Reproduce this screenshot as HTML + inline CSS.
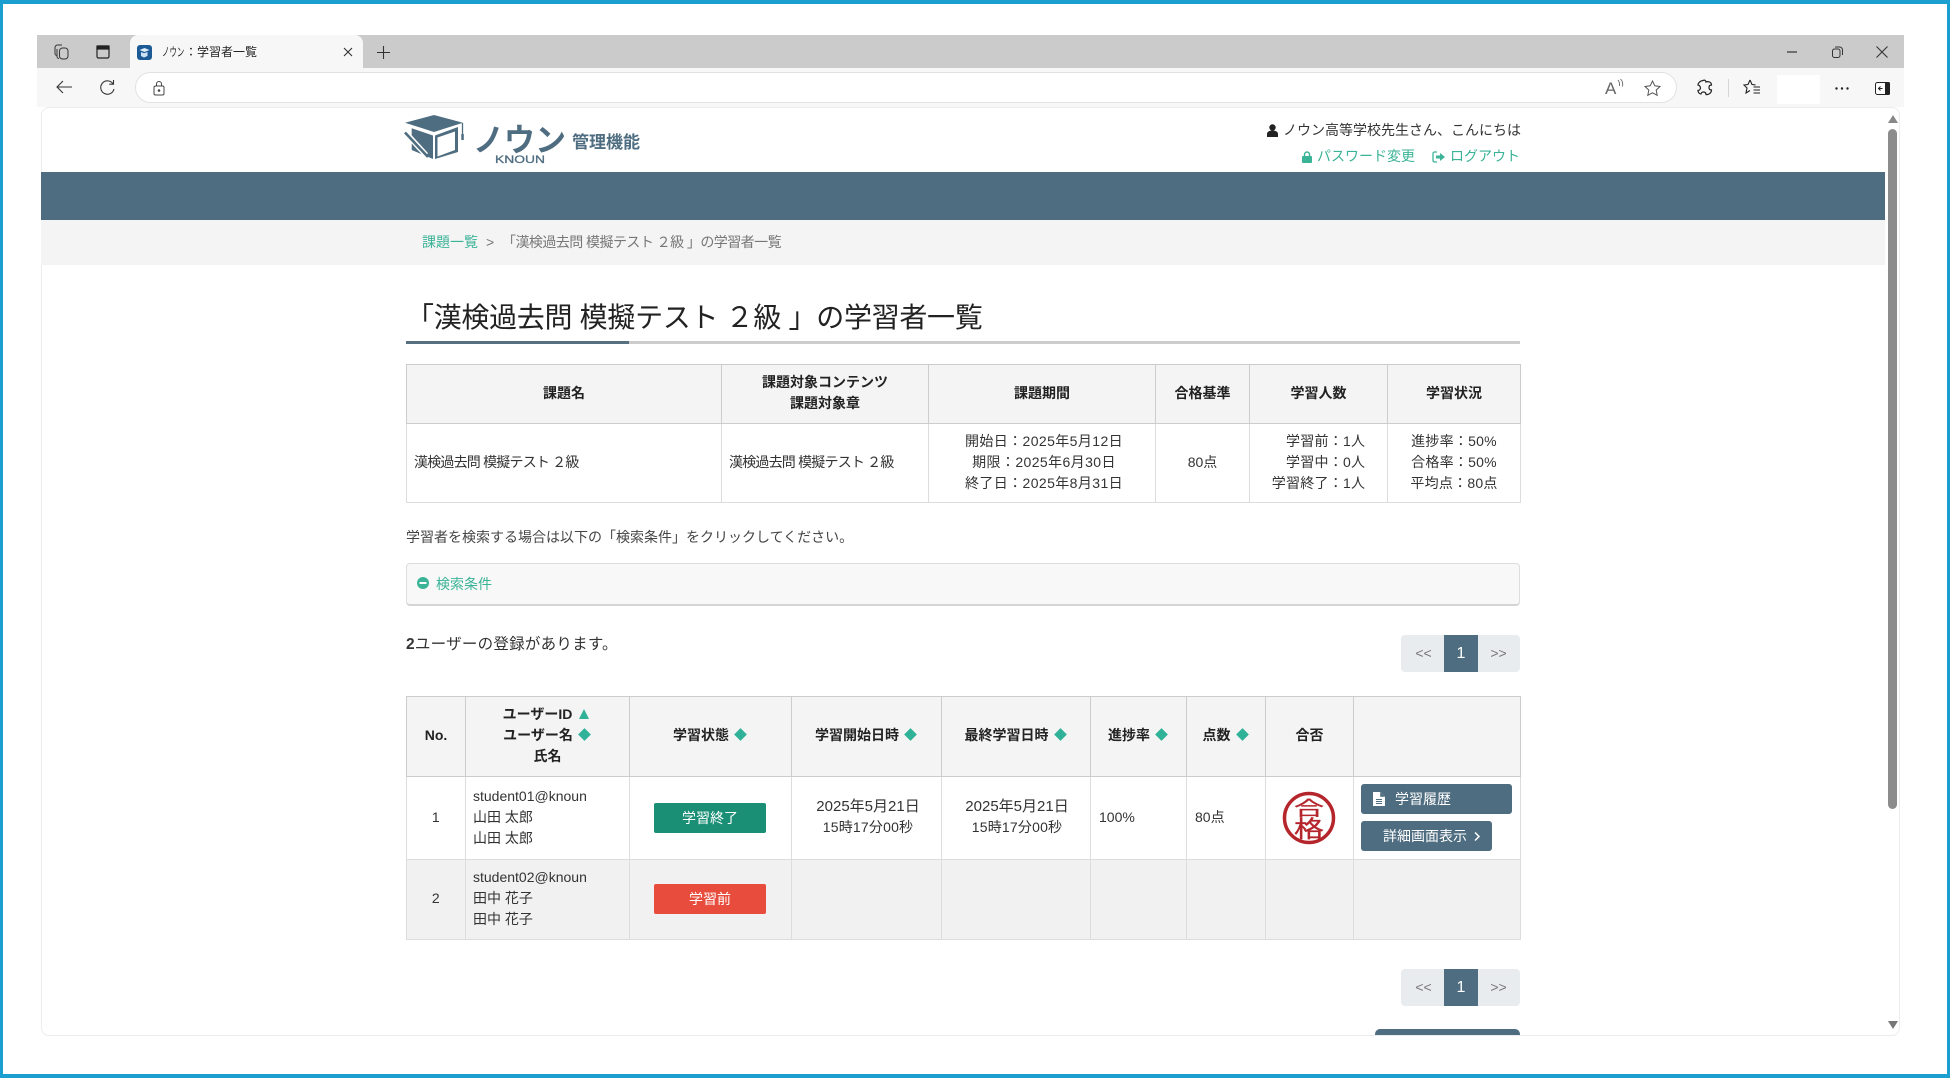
<!DOCTYPE html>
<html lang="ja"><head><meta charset="utf-8"><title>ノウン：学習者一覧</title>
<style>
*{box-sizing:border-box}
html,body{margin:0;padding:0;width:1950px;height:1078px;overflow:hidden;background:#fff}
body{position:relative;font-family:"Liberation Sans","Noto Sans CJK JP",sans-serif;font-size:14px;color:#333}
.a{position:absolute}
.t{position:absolute;white-space:nowrap;line-height:20px;height:20px}
.g{color:#3bb397}
table{position:absolute;border-collapse:collapse;table-layout:fixed;font-size:14px}
td,th{padding:0 0 2px;text-align:center;vertical-align:middle;line-height:21px;color:#333}
th{background:#f4f4f4;border:1px solid #ccc;font-weight:700;color:#222}
td{border:1px solid #ddd;letter-spacing:.4px}
.l{text-align:left;padding-left:7px}
.d{display:inline-block;width:9px;height:9px;background:#2fb298;transform:rotate(45deg);margin-left:7px;margin-right:3px;vertical-align:1px}
.up{display:inline-block;width:0;height:0;border-left:5px solid transparent;border-right:5px solid transparent;border-bottom:10px solid #2fb298;margin-left:7px;margin-right:3px}
.btn{position:absolute;background:#4f6d80;color:#fff;border-radius:3px;line-height:30px;height:30px}
.pg{position:absolute;left:1401px;width:119px;height:37px;background:#e9ecef;border-radius:4px;color:#777;font-size:14px;line-height:37px}
.pg b{position:absolute;left:43px;width:34px;height:37px;background:#4f6d80;color:#fff;text-align:center;font-weight:400;font-size:16px}
.pg span{position:absolute;width:43px;text-align:center}
svg{position:absolute;overflow:visible}
</style></head><body>
<!-- outer frame -->
<div class="a" style="left:0;top:0;width:1950px;height:1078px;border:solid #1b9fd1;border-width:4px 3px 4px 3px"></div>

<!-- browser chrome -->
<div class="a" style="left:37px;top:35px;width:1867px;height:33px;background:#cbcbcb"></div>
<div class="a" style="left:37px;top:68px;width:1867px;height:39px;background:#f7f7f7"></div>
<div class="a" style="left:130px;top:35px;width:233px;height:33px;background:#f7f7f7;border-radius:8px 8px 0 0"></div>
<!-- collections icon -->
<svg style="left:54px;top:44px" width="16" height="16" viewBox="0 0 16 16" fill="none" stroke="#333" stroke-width="1"><path d="M5 14.500a2 2 0 0 1-2-2V5"/><path d="M3 11.500A2 2 0 0 1 1 9.500V3.500"/><rect x="5.500" y="4" width="8.500" height="11" rx="3"/><path d="M1 5V3.500a2.500 2.500 0 0 1 2.500-2.500H8"/></svg>
<!-- tab icon -->
<svg style="left:96px;top:45px" width="14" height="14" viewBox="0 0 14 14" fill="none" stroke="#222" stroke-width="1.200"><rect x="1" y="1" width="12" height="12" rx="1.500"/><rect x="1" y="1" width="12" height="3" fill="#222"/></svg>
<!-- favicon -->
<div class="a" style="left:137px;top:45px;width:15px;height:15px;background:#1c5a96;border-radius:3px"></div>
<svg style="left:137px;top:45px" width="15" height="15" viewBox="0 0 15 15"><path d="M2.500 5L7.500 3l5 2-5 2z" fill="#dfeefa"/><path d="M4 7l3 1.300 3.500-1.300v4l-3.500 1.500L4 11z" fill="#cfe3f5"/></svg>
<div class="t" style="left:162px;top:42px;font-size:12px;color:#222"><span style="display:inline-block;width:23px;transform:scaleX(.62);transform-origin:left">ノウン</span><span>：学習者一覧</span></div>
<svg style="left:343px;top:47px" width="10" height="10" viewBox="0 0 10 10" stroke="#333" stroke-width="1.100" fill="none"><path d="M1 1l8 8M9 1L1 9"/></svg>
<svg style="left:377px;top:46px" width="13" height="13" viewBox="0 0 13 13" stroke="#333" stroke-width="1.100" fill="none"><path d="M6.500 0v13M0 6.500h13"/></svg>
<svg style="left:1787px;top:51px" width="10" height="2"><path d="M0 1h10" stroke="#333" stroke-width="1.200"/></svg>
<svg style="left:1832px;top:46px" width="11" height="12" viewBox="0 0 11 12" fill="none" stroke="#333" stroke-width="1"><rect x=".5" y="3" width="7.500" height="8.500" rx="2"/><path d="M3 1h4.500a3 3 0 0 1 3 3v5"/></svg>
<svg style="left:1876px;top:46px" width="12" height="12" viewBox="0 0 12 12" fill="none" stroke="#333" stroke-width="1.100"><path d="M.5.5l11 11M11.500.5l-11 11"/></svg>

<!-- toolbar -->
<svg style="left:56px;top:80px" width="16" height="14" viewBox="0 0 16 14" fill="none" stroke="#333" stroke-width="1.100"><path d="M16 7H1M7 1L1 7l6 6"/></svg>
<svg style="left:100px;top:80px" width="15" height="16" viewBox="0 0 15 16" fill="none" stroke="#333" stroke-width="1.100"><path d="M13 3.800A6.700 6.700 0 1 0 14 9"/><path d="M13.500 0v4.200H9.300"/></svg>
<div class="a" style="left:135px;top:72px;width:1542px;height:31px;background:#fff;border:1px solid #e2e2e2;border-radius:16px"></div>
<svg style="left:153px;top:80px" width="12" height="16" viewBox="0 0 12 16" fill="none" stroke="#444" stroke-width="1"><rect x="1" y="6" width="10" height="9" rx="1.500"/><path d="M3.500 6V4a2.500 2.500 0 0 1 5 0v2"/><circle cx="6" cy="10.500" r=".8" fill="#444"/></svg>
<div class="t" style="left:1605px;top:79px;font-size:17px;color:#666">A</div>
<svg style="left:1617px;top:79px" width="7" height="10" viewBox="0 0 7 10" fill="none" stroke="#555" stroke-width=".8"><path d="M1 1q2 2.500 1.500 6M3.500 0q3 3 2 7.500"/></svg>
<svg style="left:1644px;top:80px" width="17" height="16" viewBox="0 0 17 16" fill="none" stroke="#555" stroke-width="1"><path d="M8.500 1l2.300 4.800 5.200.7-3.800 3.600 1 5.200-4.700-2.500-4.700 2.500 1-5.200L1 6.500l5.200-.7z"/></svg>
<svg style="left:1697px;top:79px" width="16" height="17" viewBox="0 0 16 17" fill="none" stroke="#222" stroke-width="1.200"><path d="M6 1.500c2-1 3 .5 3 1.500 2-1 5.500 0 5.500 3-1.500 0-2.500 1-2.500 2.500s1 2.500 2.500 2.500c0 3-3 5-5.500 4.500 0-1.500-1-2.500-2.500-2.500S4 14 4 15c-2 0-3-2-3-3.500 1 0 2.500-1 2.500-2.500S2 6 1 6c0-2 2-4 5-4.500z"/></svg>
<div class="a" style="left:1728px;top:79px;width:1px;height:18px;background:#d5d5d5"></div>
<svg style="left:1743px;top:79px" width="18" height="17" viewBox="0 0 18 17" fill="none" stroke="#222" stroke-width="1.100"><path d="M7 1l2 4.500 3.500.4M7 1L5 5.500 1 6l3 3-1 5 4-2.500"/><path d="M10.500 8H17M10.500 11H17M10.500 14H17"/></svg>
<div class="a" style="left:1777px;top:75px;width:43px;height:29px;background:#fff"></div>
<svg style="left:1835px;top:87px" width="14" height="3"><circle cx="1.500" cy="1.500" r="1.200" fill="#222"/><circle cx="7" cy="1.500" r="1.200" fill="#222"/><circle cx="12.500" cy="1.500" r="1.200" fill="#222"/></svg>
<svg style="left:1875px;top:82px" width="15" height="13" viewBox="0 0 15 13"><rect x=".5" y=".5" width="14" height="12" rx="2" fill="#fff" stroke="#222"/><rect x="10" y="0" width="5" height="13" rx="1.500" fill="#222"/><path d="M7.500 6.500H3.500M5.500 4.500l-2 2 2 2" fill="none" stroke="#222"/></svg>

<!-- content panel -->
<div class="a" style="left:41px;top:107px;width:1859px;height:929px;background:#fff;border:1px solid #ececec;border-radius:8px"></div>

<!-- header -->
<svg style="left:404px;top:114px" width="62" height="46" viewBox="0 0 62 46">
<path d="M1 8.700L30 1l29 7.700L30 18z" fill="#4f6d80"/>
<path d="M7.700 14.300L29 21.500V45L7.700 36z" fill="#4f6d80"/>
<path d="M31 21.500L54 13V38L31 45z" fill="#4f6d80"/>
<path d="M33.500 23.500L51 17.500V36L33.500 42.500z" fill="#fff"/>
<path d="M0 17L22 41" fill="none" stroke="#fff" stroke-width="5.500"/>
<path d="M1 18.500L24 43" fill="none" stroke="#4f6d80" stroke-width="2.600"/>
<path d="M58.500 9v12" stroke="#4f6d80" stroke-width="1.300"/><path d="M57.300 20h2.500v6h-2.500z" fill="#4f6d80"/>
</svg>
<svg style="left:470px;top:122px" width="175" height="44" viewBox="0 0 175 44">
<text x="3" y="29" font-family="'Noto Sans CJK JP',sans-serif" font-size="32" font-weight="700" fill="#4f6d80" textLength="93" lengthAdjust="spacingAndGlyphs">ノウン</text>
<text x="25" y="41" font-family="'Liberation Sans',sans-serif" font-size="11" fill="#4f6d80" textLength="50" lengthAdjust="spacingAndGlyphs" stroke="#4f6d80" stroke-width=".3">KNOUN</text>
<text x="102" y="26" font-family="'Noto Sans CJK JP',sans-serif" font-size="17" font-weight="700" fill="#4f6d80">管理機能</text>
</svg>
<svg style="left:1267px;top:124px" width="11" height="13" viewBox="0 0 11 13" fill="#222"><circle cx="5.500" cy="3.500" r="3.200"/><path d="M0 13V10c0-2 2-3.500 5.500-3.500S11 8 11 10v3z"/></svg>
<div class="t" style="left:1283px;top:120px;color:#333">ノウン高等学校先生さん、こんにちは</div>
<svg style="left:1302px;top:151px" width="10" height="12" viewBox="0 0 10 12" fill="#3bb397"><rect y="5" width="10" height="7" rx="1"/><path d="M2.500 5V3.500a2.500 2.500 0 0 1 5 0V5" fill="none" stroke="#3bb397" stroke-width="1.400"/></svg>
<div class="t g" style="left:1317px;top:146px">パスワード変更</div>
<svg style="left:1432px;top:151px" width="13" height="12" viewBox="0 0 13 12"><path d="M5 1H2.500A1.500 1.500 0 0 0 1 2.500v7A1.500 1.500 0 0 0 2.500 11H5" fill="none" stroke="#3bb397" stroke-width="1.300"/><path d="M4 4.500h4V2l5 4-5 4V7.500H4z" fill="#3bb397"/></svg>
<div class="t g" style="left:1450px;top:146px">ログアウト</div>
<div class="a" style="left:41px;top:172px;width:1844px;height:48px;background:#4f6d80"></div>
<div class="a" style="left:41px;top:220px;width:1844px;height:45px;background:#f4f4f4"></div>
<div class="t g" style="left:422px;top:232px">課題一覧</div>
<div class="t" style="left:486px;top:232px;color:#777">&gt;</div>
<div class="t" style="left:502px;top:232px;color:#777;font-size:14px;letter-spacing:-.55px">「漢検過去問 模擬テスト ２級 」の学習者一覧</div>

<!-- scrollbar -->
<svg style="left:1888px;top:115px" width="10" height="8"><path d="M5 0l5 8H0z" fill="#888"/></svg>
<div class="a" style="left:1888px;top:129px;width:9px;height:680px;background:#8c8c8c;border-radius:5px"></div>
<svg style="left:1888px;top:1021px" width="10" height="8"><path d="M0 0h10L5 8z" fill="#777"/></svg>

<!-- title -->
<div class="t" style="left:406px;top:298px;height:40px;line-height:40px;font-size:28px;color:#222;letter-spacing:-.3px">「漢検過去問 模擬テスト ２級 」の学習者一覧</div>
<div class="a" style="left:406px;top:341px;width:1114px;height:3px;background:#ccc"></div>
<div class="a" style="left:406px;top:341px;width:223px;height:3px;background:#56707f"></div>

<!-- summary table -->
<table style="left:406px;top:364px;width:1114px">
<colgroup><col style="width:315px"><col style="width:207px"><col style="width:227px"><col style="width:94px"><col style="width:138px"><col style="width:133px"></colgroup>
<tr style="height:59px"><th>課題名</th><th>課題対象コンテンツ<br>課題対象章</th><th>課題期間</th><th>合格基準</th><th>学習人数</th><th>学習状況</th></tr>
<tr style="height:79px"><td class="l" style="letter-spacing:-.8px">漢検過去問 模擬テスト ２級</td><td class="l" style="letter-spacing:-.8px">漢検過去問 模擬テスト ２級</td>
<td style="padding-left:4px">開始日：2025年5月12日<br>期限：2025年6月30日<br>終了日：2025年8月31日</td><td style="letter-spacing:0">80点</td>
<td style="letter-spacing:.25px"><div style="display:inline-block;text-align:right">学習前：1人<br>学習中：0人<br>学習終了：1人</div></td>
<td style="letter-spacing:.25px">進捗率：50%<br>合格率：50%<br>平均点：80点</td></tr>
</table>

<div class="t" style="left:406px;top:527px;color:#444">学習者を検索する場合は以下の「検索条件」をクリックしてください。</div>

<!-- search accordion -->
<div class="a" style="left:406px;top:563px;width:1114px;height:43px;background:#f8f8f8;border:1px solid #ddd;border-bottom:2px solid #d5d5d5;border-radius:4px"></div>
<svg style="left:417px;top:577px" width="12" height="12"><circle cx="6" cy="6" r="6" fill="#3bb397"/><rect x="2.500" y="5" width="7" height="2" fill="#fff"/></svg>
<div class="t g" style="left:436px;top:574px">検索条件</div>

<div class="t" style="left:406px;top:635px;font-size:15.500px;letter-spacing:.25px;color:#333"><b>2</b>ユーザーの登録があります。</div>

<div class="pg" style="top:635px"><span style="left:1px">&lt;&lt;</span><b>1</b><span style="left:76px">&gt;&gt;</span></div>

<!-- users table -->
<table style="left:406px;top:696px;width:1114px">
<colgroup><col style="width:59px"><col style="width:164px"><col style="width:162px"><col style="width:150px"><col style="width:149px"><col style="width:96px"><col style="width:79px"><col style="width:88px"><col style="width:167px"></colgroup>
<tr style="height:80px">
<th>No.</th><th>ユーザーID<i class="up"></i><br>ユーザー名<i class="d"></i><br>氏名</th>
<th>学習状態<i class="d"></i></th><th>学習開始日時<i class="d"></i></th><th>最終学習日時<i class="d"></i></th><th>進捗率<i class="d"></i></th><th>点数<i class="d"></i></th><th>合否</th><th></th></tr>
<tr style="height:83px"><td>1</td><td class="l" style="letter-spacing:0">student01@knoun<br>山田 太郎<br>山田 太郎</td><td></td>
<td style="padding-left:3px;letter-spacing:.2px"><span style="font-size:15px;letter-spacing:0">2025年5月21日</span><br>15時17分00秒</td><td style="padding-left:2px;letter-spacing:.2px"><span style="font-size:15px;letter-spacing:0">2025年5月21日</span><br>15時17分00秒</td><td class="l" style="letter-spacing:0;padding-left:8px">100%</td><td class="l" style="letter-spacing:0;padding-left:8px">80点</td><td></td><td></td></tr>
<tr style="height:80px;background:#f1f1f1"><td>2</td><td class="l" style="letter-spacing:0">student02@knoun<br>田中 花子<br>田中 花子</td><td></td><td></td><td></td><td></td><td></td><td></td><td></td></tr>
</table>

<div class="a" style="left:654px;top:803px;width:112px;height:30px;line-height:30px;background:#1a8f76;color:#fff;text-align:center;border-radius:2px">学習終了</div>
<div class="a" style="left:654px;top:884px;width:112px;height:30px;line-height:30px;background:#e74c3c;color:#fff;text-align:center;border-radius:2px">学習前</div>

<!-- stamp -->
<svg style="left:1282px;top:791px" width="54" height="54" viewBox="0 0 54 54">
<ellipse cx="27" cy="27" rx="24.500" ry="24.500" fill="#fff" stroke="#b5252c" stroke-width="3.500"/>
<text transform="translate(27,24) scale(1.250,.8)" text-anchor="middle" font-family="'Noto Sans CJK JP',sans-serif" font-size="24" fill="#b5252c" stroke="#b5252c" stroke-width=".3">合</text>
<text transform="translate(27,46) scale(1.250,.98)" text-anchor="middle" font-family="'Noto Sans CJK JP',sans-serif" font-size="24" fill="#b5252c" stroke="#b5252c" stroke-width=".3">格</text>
</svg>

<!-- action buttons -->
<div class="btn" style="left:1361px;top:784px;width:151px"></div>
<svg style="left:1373px;top:792px" width="12" height="14" viewBox="0 0 12 14"><path d="M0 0h7.500L12 4.500V14H0z" fill="#fff"/><path d="M7.500 0v4.500H12" fill="#4f6d80" stroke="#4f6d80" stroke-width=".6"/><path d="M3 7.500h6M3 9.500h6M3 11.500h6" stroke="#4f6d80"/></svg>
<div class="t" style="left:1395px;top:789px;color:#fff">学習履歴</div>
<div class="btn" style="left:1361px;top:821px;width:131px"></div>
<div class="t" style="left:1383px;top:826px;color:#fff">詳細画面表示</div>
<svg style="left:1474px;top:832px" width="6" height="9" viewBox="0 0 6 9" fill="none" stroke="#fff" stroke-width="1.500"><path d="M1 .5l4 4-4 4"/></svg>

<div class="pg" style="top:969px"><span style="left:1px">&lt;&lt;</span><b>1</b><span style="left:76px">&gt;&gt;</span></div>

<!-- cut-off button -->
<div class="a" style="left:1375px;top:1029px;width:145px;height:6px;background:#4f6d80;border-radius:5px 5px 0 0"></div>
</body></html>
